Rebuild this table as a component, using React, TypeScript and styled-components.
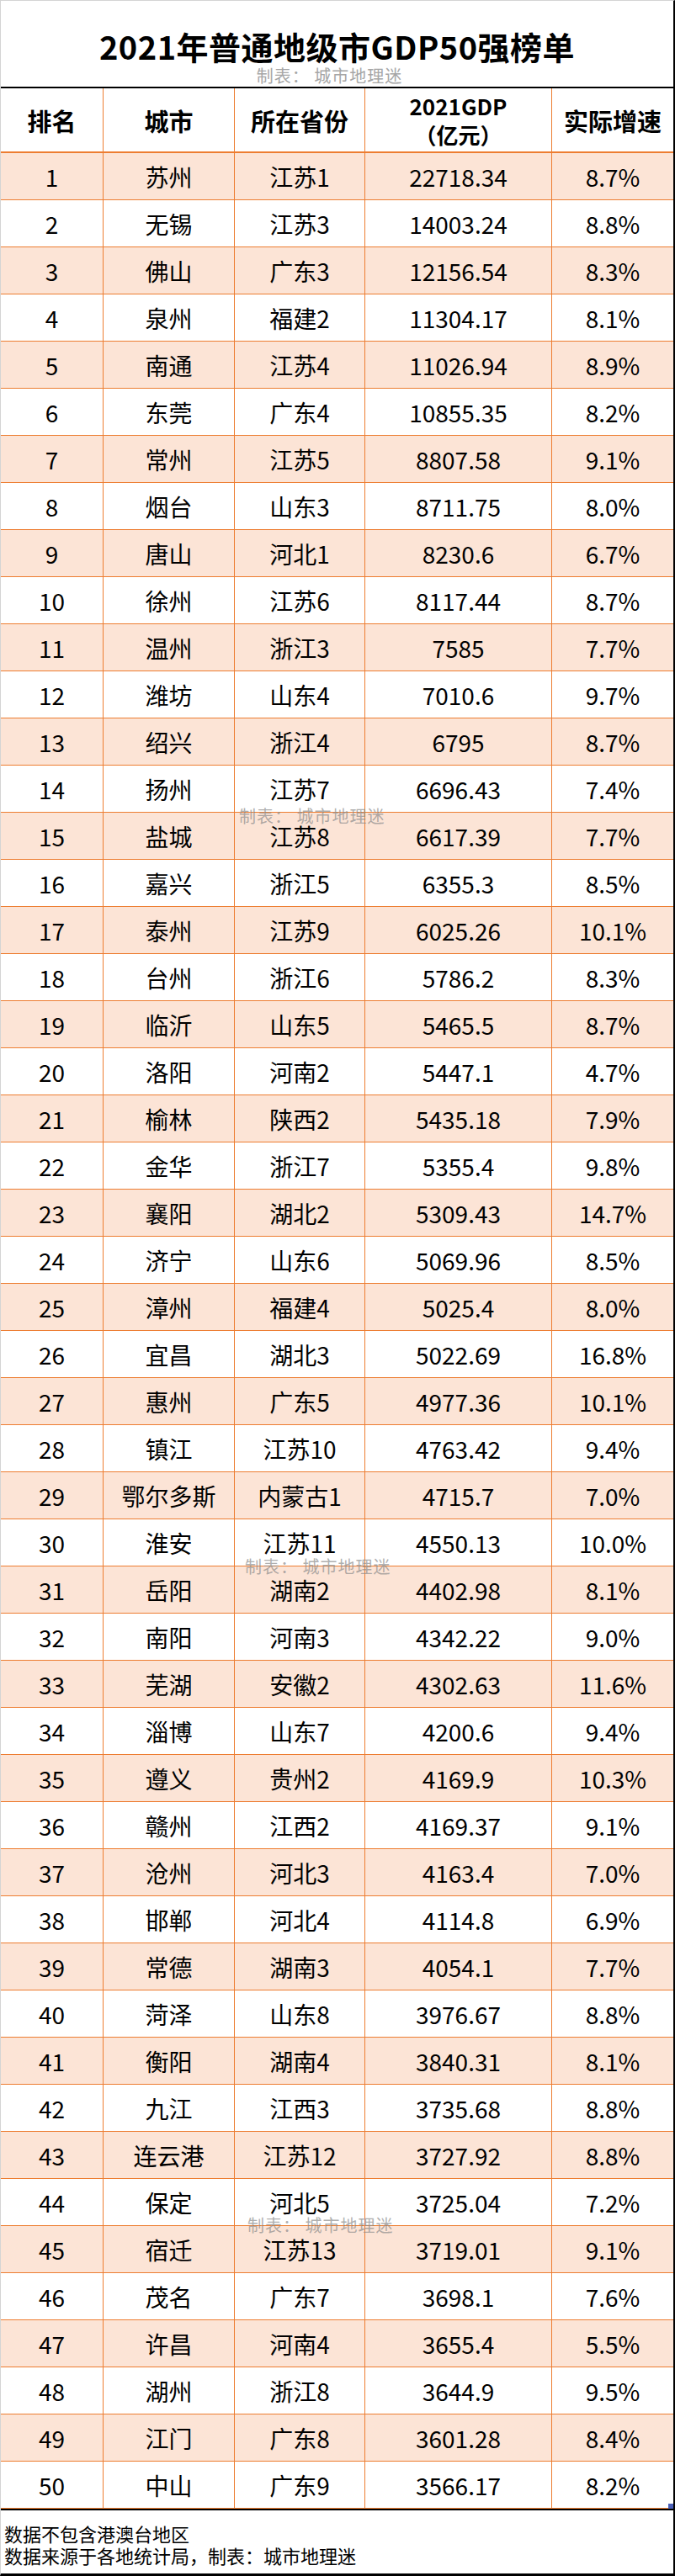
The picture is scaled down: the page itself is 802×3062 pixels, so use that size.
import React from "react";
import styled, { createGlobalStyle } from "styled-components";

const GlobalStyle = createGlobalStyle`
  * {
    box-sizing: border-box;
  }
  body {
    margin: 0;
    background: #ffffff;
    font-family: "Noto Sans CJK SC", "Noto Sans", sans-serif;
    color: #000000;
  }
`;

const Sheet = styled.div`
  position: relative;
  width: 802px;
  height: 3062px;
  border-top: 1px solid #d4d4d4;
  border-left: 1px solid #d4d4d4;
  border-right: 2px solid #000000;
  border-bottom: 3px solid #000000;
  display: flex;
  flex-direction: column;
`;

const TitleBox = styled.div`
  height: 102px;
  padding-top: 33px;
  display: flex;
  flex-direction: column;
  align-items: center;
`;

const Title = styled.h1`
  margin: 0;
  font-size: 38px;
  line-height: 42px;
  font-weight: 700;
  letter-spacing: 0.5px;
`;

const Maker = styled.div`
  margin-top: 3px;
  margin-right: 18px;
  font-size: 20px;
  line-height: 22px;
  color: #a6a6a6;
  letter-spacing: 1px;
`;

const Table = styled.div`
  border-top: 2px solid #000000;
  display: flex;
  flex-direction: column;
`;

const Row = styled.div<{ $head?: boolean; $odd?: boolean }>`
  display: grid;
  grid-template-columns: 121px 156px 155px 222px 1fr;
  height: ${(p) => (p.$head ? "77px" : "56px")};
  background: ${(p) => (p.$odd ? "#fce4d6" : "#ffffff")};
  border-bottom: ${(p) => (p.$head ? "2px" : "1px")} solid #ed7d31;
`;

const Cell = styled.div<{ $head?: boolean }>`
  display: flex;
  flex-direction: column;
  align-items: center;
  justify-content: center;
  text-align: center;
  white-space: nowrap;
  font-size: ${(p) => (p.$head ? "29px" : "28px")};
  font-weight: ${(p) => (p.$head ? 700 : 400)};
  line-height: ${(p) => (p.$head ? "34px" : "32px")};
  & + & {
    border-left: 1px solid #ed7d31;
  }
`;

const SmallHead = styled.span`
  font-size: 26px;
`;

const Footer = styled.div`
  position: relative;
  flex: 1;
  border-top: 2px solid #000000;
  padding: 14px 0 0 4px;
  font-size: 22px;
  line-height: 26px;
`;

const Handle = styled.span`
  position: absolute;
  right: 0;
  top: -8px;
  width: 6px;
  height: 6px;
  background: #4a5fb8;
`;

const Watermark = styled.span<{ $top: number; $left: number }>`
  position: absolute;
  top: ${(p) => p.$top}px;
  left: ${(p) => p.$left}px;
  font-size: 20px;
  line-height: 24px;
  letter-spacing: 1px;
  color: rgba(140, 140, 140, 0.7);
  pointer-events: none;
`;

const rows: [string, string, string, string][] = [
  ["苏州", "江苏1", "22718.34", "8.7%"],
  ["无锡", "江苏3", "14003.24", "8.8%"],
  ["佛山", "广东3", "12156.54", "8.3%"],
  ["泉州", "福建2", "11304.17", "8.1%"],
  ["南通", "江苏4", "11026.94", "8.9%"],
  ["东莞", "广东4", "10855.35", "8.2%"],
  ["常州", "江苏5", "8807.58", "9.1%"],
  ["烟台", "山东3", "8711.75", "8.0%"],
  ["唐山", "河北1", "8230.6", "6.7%"],
  ["徐州", "江苏6", "8117.44", "8.7%"],
  ["温州", "浙江3", "7585", "7.7%"],
  ["潍坊", "山东4", "7010.6", "9.7%"],
  ["绍兴", "浙江4", "6795", "8.7%"],
  ["扬州", "江苏7", "6696.43", "7.4%"],
  ["盐城", "江苏8", "6617.39", "7.7%"],
  ["嘉兴", "浙江5", "6355.3", "8.5%"],
  ["泰州", "江苏9", "6025.26", "10.1%"],
  ["台州", "浙江6", "5786.2", "8.3%"],
  ["临沂", "山东5", "5465.5", "8.7%"],
  ["洛阳", "河南2", "5447.1", "4.7%"],
  ["榆林", "陕西2", "5435.18", "7.9%"],
  ["金华", "浙江7", "5355.4", "9.8%"],
  ["襄阳", "湖北2", "5309.43", "14.7%"],
  ["济宁", "山东6", "5069.96", "8.5%"],
  ["漳州", "福建4", "5025.4", "8.0%"],
  ["宜昌", "湖北3", "5022.69", "16.8%"],
  ["惠州", "广东5", "4977.36", "10.1%"],
  ["镇江", "江苏10", "4763.42", "9.4%"],
  ["鄂尔多斯", "内蒙古1", "4715.7", "7.0%"],
  ["淮安", "江苏11", "4550.13", "10.0%"],
  ["岳阳", "湖南2", "4402.98", "8.1%"],
  ["南阳", "河南3", "4342.22", "9.0%"],
  ["芜湖", "安徽2", "4302.63", "11.6%"],
  ["淄博", "山东7", "4200.6", "9.4%"],
  ["遵义", "贵州2", "4169.9", "10.3%"],
  ["赣州", "江西2", "4169.37", "9.1%"],
  ["沧州", "河北3", "4163.4", "7.0%"],
  ["邯郸", "河北4", "4114.8", "6.9%"],
  ["常德", "湖南3", "4054.1", "7.7%"],
  ["菏泽", "山东8", "3976.67", "8.8%"],
  ["衡阳", "湖南4", "3840.31", "8.1%"],
  ["九江", "江西3", "3735.68", "8.8%"],
  ["连云港", "江苏12", "3727.92", "8.8%"],
  ["保定", "河北5", "3725.04", "7.2%"],
  ["宿迁", "江苏13", "3719.01", "9.1%"],
  ["茂名", "广东7", "3698.1", "7.6%"],
  ["许昌", "河南4", "3655.4", "5.5%"],
  ["湖州", "浙江8", "3644.9", "9.5%"],
  ["江门", "广东8", "3601.28", "8.4%"],
  ["中山", "广东9", "3566.17", "8.2%"],
];

// watermark stamps laid over the sheet
const marks = [
  { top: 957, left: 283 },
  { top: 1849, left: 290 },
  { top: 2632, left: 293 },
];

export default function App() {
  return (
    <>
      <GlobalStyle />
      <Sheet>
        <TitleBox>
          <Title>2021年普通地级市GDP50强榜单</Title>
          <Maker>制表： 城市地理迷</Maker>
        </TitleBox>
        <Table>
          <Row $head>
            <Cell $head>排名</Cell>
            <Cell $head>城市</Cell>
            <Cell $head>所在省份</Cell>
            <Cell $head>
              <SmallHead>2021GDP</SmallHead>
              <SmallHead>（亿元）</SmallHead>
            </Cell>
            <Cell $head>实际增速</Cell>
          </Row>
          {rows.map(([city, prov, gdp, growth], i) => (
            <Row key={city} $odd={i % 2 === 0}>
              <Cell>{i + 1}</Cell>
              <Cell>{city}</Cell>
              <Cell>{prov}</Cell>
              <Cell>{gdp}</Cell>
              <Cell>{growth}</Cell>
            </Row>
          ))}
        </Table>
        <Footer>
          <Handle />
          <div>数据不包含港澳台地区</div>
          <div>数据来源于各地统计局，制表：城市地理迷</div>
        </Footer>
        {marks.map((m) => (
          <Watermark key={m.top} $top={m.top} $left={m.left}>
            制表： 城市地理迷
          </Watermark>
        ))}
      </Sheet>
    </>
  );
}
